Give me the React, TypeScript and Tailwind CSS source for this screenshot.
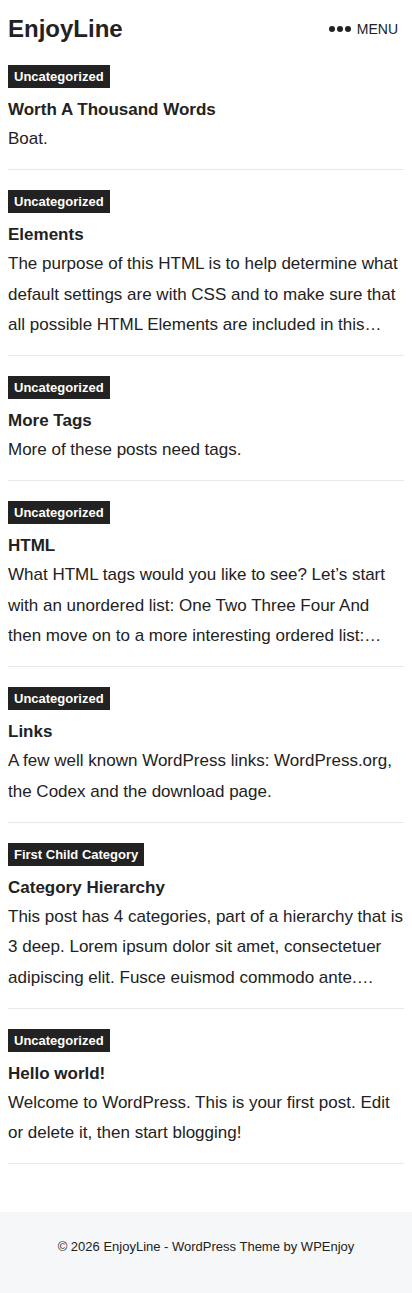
const posts = [
  {
    cat: "Uncategorized",
    title: "Worth A Thousand Words",
    body: "Boat.",
  },
  {
    cat: "Uncategorized",
    title: "Elements",
    body: "The purpose of this HTML is to help determine what default settings are with CSS and to make sure that all possible HTML Elements are included in this…",
  },
  {
    cat: "Uncategorized",
    title: "More Tags",
    body: "More of these posts need tags.",
  },
  {
    cat: "Uncategorized",
    title: "HTML",
    body: "What HTML tags would you like to see? Let’s start with an unordered list: One Two Three Four And then move on to a more interesting ordered list:…",
  },
  {
    cat: "Uncategorized",
    title: "Links",
    body: "A few well known WordPress links: WordPress.org, the Codex and the download page.",
  },
  {
    cat: "First Child Category",
    title: "Category Hierarchy",
    body: "This post has 4 categories, part of a hierarchy that is 3 deep. Lorem ipsum dolor sit amet, consectetuer adipiscing elit. Fusce euismod commodo ante.…",
  },
  {
    cat: "Uncategorized",
    title: "Hello world!",
    body: "Welcome to WordPress. This is your first post. Edit or delete it, then start blogging!",
  },
];

export default function App() {
  return (
    <div className="min-h-[1293px] bg-white text-[#222] font-['Liberation_Sans',Arial,sans-serif] flex flex-col">
      {/* === HEADER */}
      <header className="flex items-center justify-between px-2 pt-[13px] h-[45px]">
        <h1 className="text-[24px] font-bold leading-none">EnjoyLine</h1>
        <button className="flex items-center gap-[6px] text-[14px] mr-[6px]">
          <span className="flex gap-[2px]">
            <span className="w-[6px] h-[6px] rounded-full bg-[#222]"></span>
            <span className="w-[6px] h-[6px] rounded-full bg-[#222]"></span>
            <span className="w-[6px] h-[6px] rounded-full bg-[#222]"></span>
          </span>
          MENU
        </button>
      </header>

      {/* === POSTS */}
      <main className="px-2">
        {posts.map((p, i) => (
          <article
            key={i}
            className="pt-[19px] pb-[14.5px] border-b border-[#e8e8e8]"
          >
            <span className="inline-block bg-[#222] text-white text-[13px] font-bold leading-[23px] px-[6px]">
              {p.cat}
            </span>
            <h2 className="text-[17px] font-bold leading-[28px] mt-[8px]">
              {p.title}
            </h2>
            <p className="text-[17px] leading-[30.5px]">{p.body}</p>
          </article>
        ))}
      </main>

      {/* === FOOTER */}
      <footer className="mt-[48px] flex-1 bg-[#f6f7f8] pt-[27px] pb-[38px] text-center text-[13px] leading-[16px]">
        © 2026 EnjoyLine - WordPress Theme by WPEnjoy
      </footer>
    </div>
  );
}
